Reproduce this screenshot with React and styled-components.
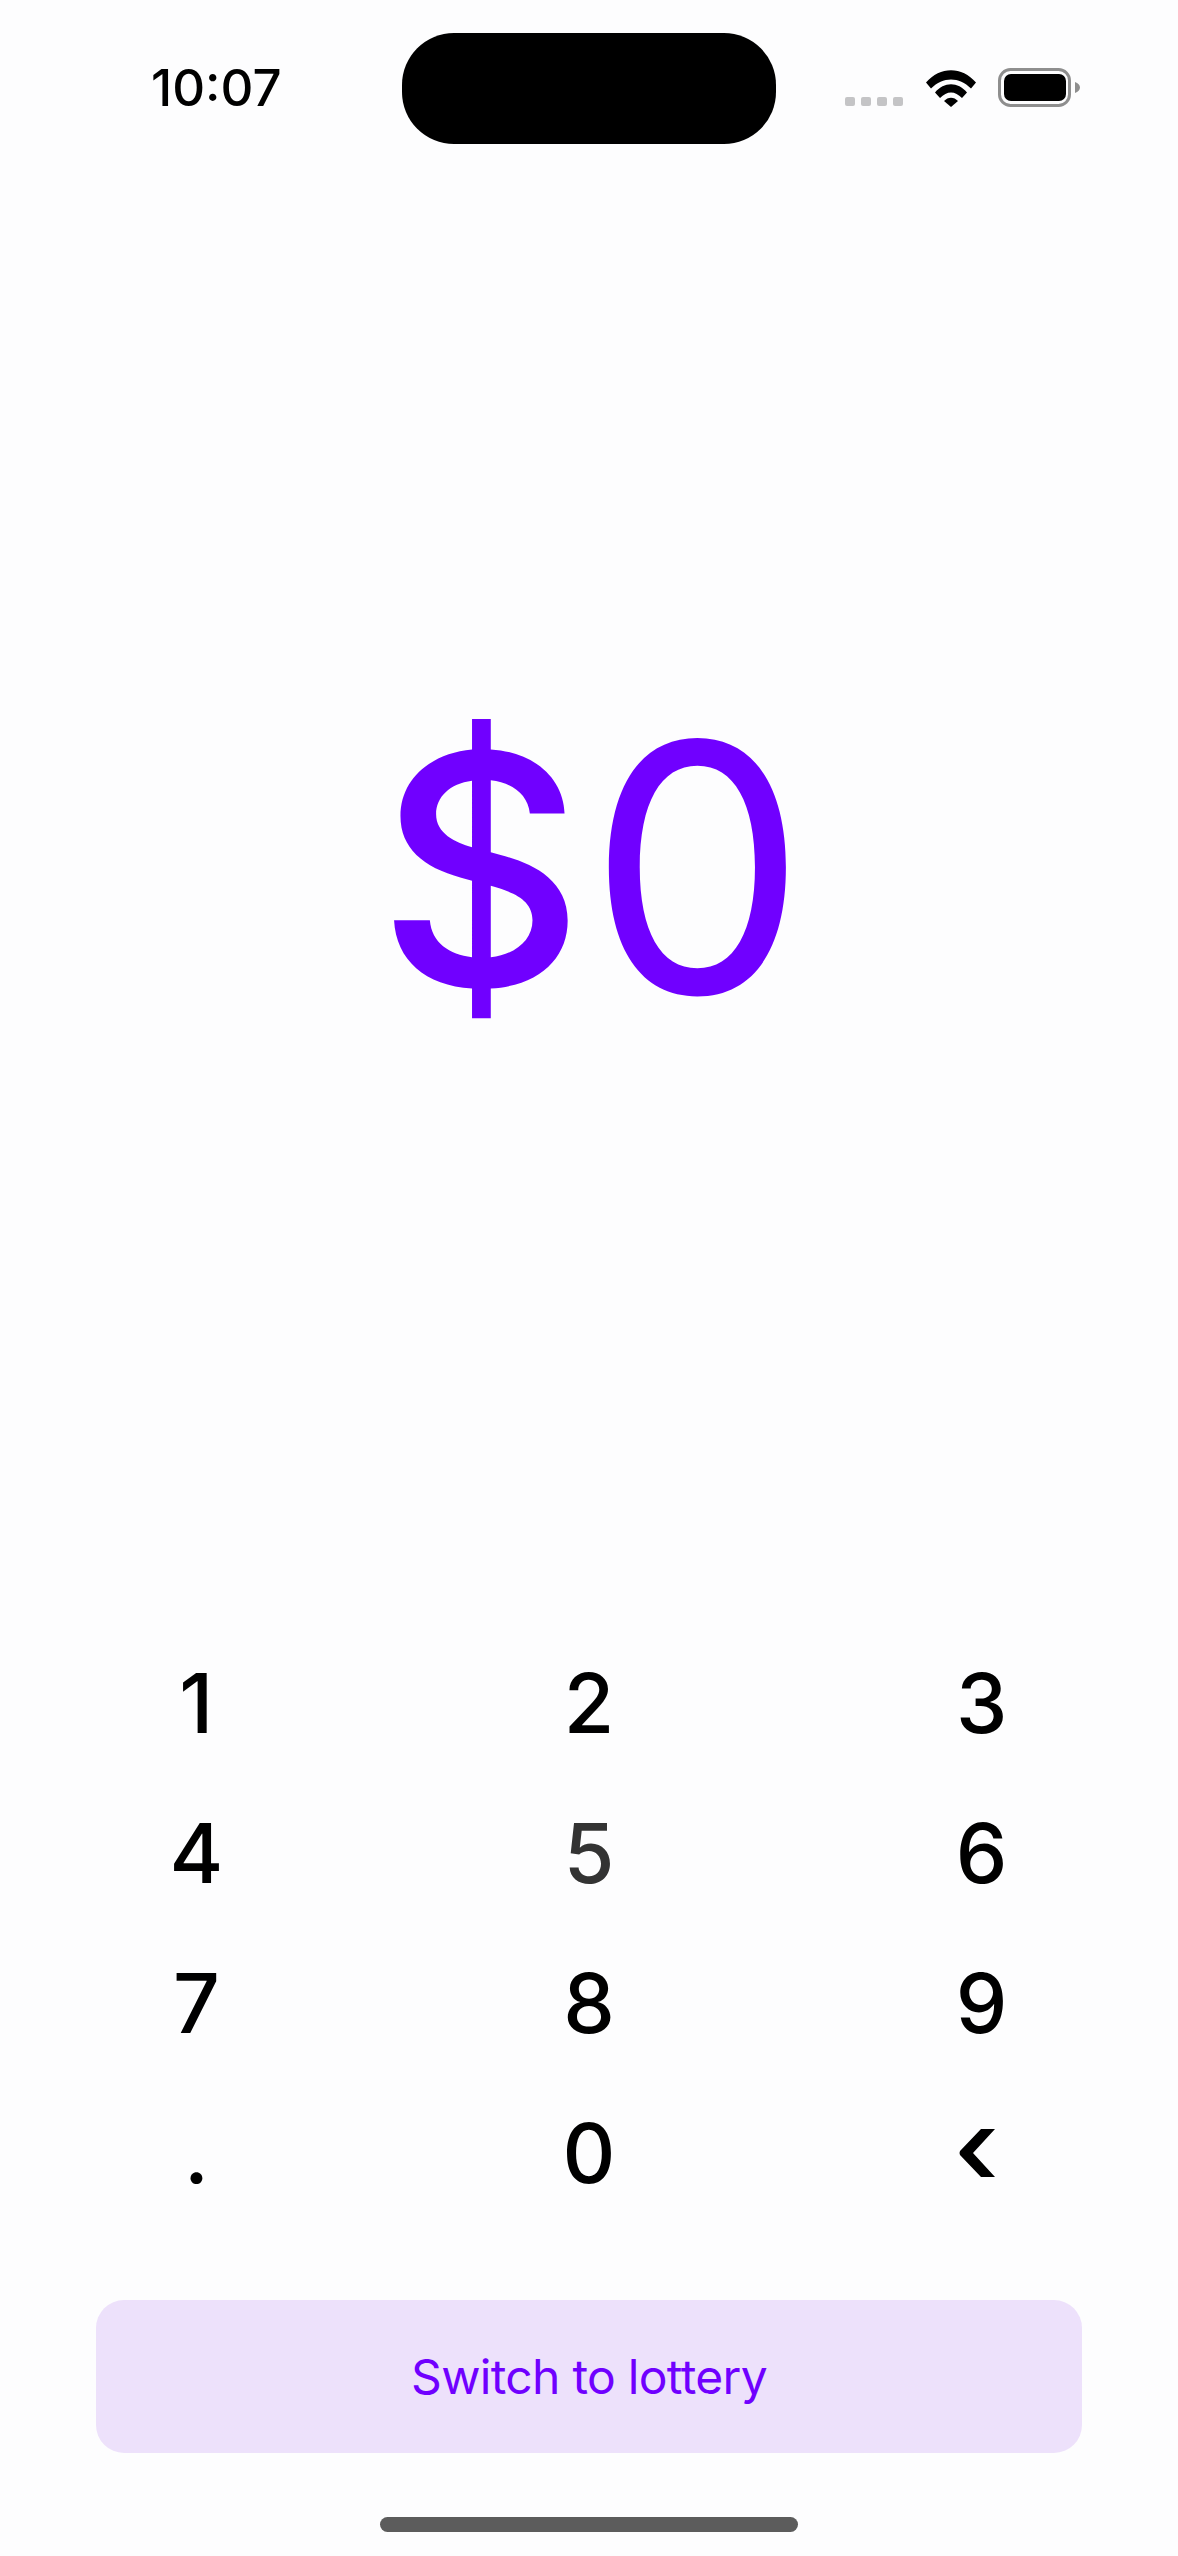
import React from 'react'
import styled, { createGlobalStyle } from 'styled-components'

const Global = createGlobalStyle`
  html, body { margin: 0; padding: 0; background: #fdfdfe; }
`;

const Page = styled.div`
  width: 1178px;
  height: 2556px;
  display: flex;
  flex-direction: column;
  background: #fdfdfe;
  font-family: Inter, "Liberation Sans", sans-serif;
  overflow: hidden;
`;

const StatusBar = styled.div`
  display: flex;
  align-items: flex-start;
  height: 111px;
  padding: 33px 98px 0 151px;
`;

const Time = styled.div`
  width: 251px;
  margin-top: 30px;
  font-size: 51px;
  line-height: 50px;
  font-weight: 500;
  color: #000;
`;

const Island = styled.div`
  width: 374px;
  height: 111px;
  border-radius: 52px;
  background: #000;
`;

const StatusIcons = styled.div`
  display: flex;
  align-items: flex-end;
  margin: 35px 0 0 69px;
`;

const SignalDots = styled.div`
  display: flex;
  gap: 6px;
  margin: 0 23px 1px 0;
`;

const Dot = styled.span`
  width: 10px;
  height: 9px;
  border-radius: 2px;
  background: #c4c4c6;
`;

const Main = styled.div`
  flex: 1;
  display: flex;
  align-items: center;
  justify-content: center;
  padding: 0 0 38px 6px;
`;

const Amount = styled.div`
  font-size: 346px;
  line-height: 1;
  font-weight: 410;
  color: #7000ff;
`;

const Currency = styled.span`
  font-size: 320px;
  font-weight: 460;
  margin-right: 4px;
  vertical-align: 8px;
`;

const Keypad = styled.div`
  display: grid;
  grid-template-columns: repeat(3, 1fr);
  grid-auto-rows: 150px;
`;

const Key = styled.div`
  display: flex;
  align-items: center;
  justify-content: center;
  font-size: 82px;
  font-weight: 450;
  color: ${({ $pressed }) => ($pressed ? '#333333' : '#000')};
`;

const SwitchButton = styled.div`
  display: flex;
  align-items: center;
  justify-content: center;
  height: 153px;
  margin: 72px 96px 0 96px;
  border-radius: 28px;
  background: #ede1fb;
  color: #7000ff;
  font-size: 48px;
  letter-spacing: -0.7px;
`;

const HomeBarWrap = styled.div`
  display: flex;
  justify-content: center;
  height: 103px;
  padding-top: 64px;
  box-sizing: border-box;
`;

const HomeBar = styled.div`
  width: 418px;
  height: 15px;
  border-radius: 8px;
  background: #5c5c5c;
`;

const BackspaceIcon = styled.svg`
  margin-right: 9px;
`;

const WifiIcon = styled.svg`
  margin-right: 22px;
`;

const Wifi = () => (
  <WifiIcon width="50" height="37" viewBox="0 0 50 37">
    <path d="M0 12.5 C14 -4 36 -4 50 12.5 L45 18.5 C33 6.5 17 6.5 5 18.5 Z" fill="#000" />
    <path d="M9 22.5 C18 11.5 32 11.5 41 22.5 L36 28 C29 20.5 21 20.5 14 28 Z" fill="#000" />
    <path d="M18 31 C22 26.5 28 26.5 32 31 L25 37 Z" fill="#000" />
  </WifiIcon>
);

const Battery = () => (
  <svg width="82" height="39" viewBox="0 0 82 39">
    <rect x="1.5" y="1.5" width="70" height="36" rx="11" fill="none" stroke="#8e8e8e" strokeWidth="3" />
    <rect x="6" y="6" width="62" height="27" rx="7" fill="#000" />
    <path d="M77 14 C80 15 82 17 82 19.5 C82 22 80 24 77 25 Z" fill="#8e8e8e" />
  </svg>
);

const Backspace = () => (
  <BackspaceIcon width="36" height="48" viewBox="0 0 36 48">
    <path d="M22 0 H36 L14 24 L36 48 H22 L1 26 Q0 24 1 22 Z" fill="#000" />
  </BackspaceIcon>
);

const keys = ['1', '2', '3', '4', '5', '6', '7', '8', '9', '.', '0'];

export default function App() {
  return (
    <Page>
      <Global />
      <StatusBar>
        <Time>10:07</Time>
        <Island />
        <StatusIcons>
          <SignalDots>
            <Dot /><Dot /><Dot /><Dot />
          </SignalDots>
          <Wifi />
          <Battery />
        </StatusIcons>
      </StatusBar>
      <Main>
        <Amount><Currency>$</Currency>0</Amount>
      </Main>
      <Keypad>
        {keys.map((k) => (
          <Key key={k} $pressed={k === '5'}>{k}</Key>
        ))}
        <Key><Backspace /></Key>
      </Keypad>
      <SwitchButton>Switch to lottery</SwitchButton>
      <HomeBarWrap>
        <HomeBar />
      </HomeBarWrap>
    </Page>
  )
}
